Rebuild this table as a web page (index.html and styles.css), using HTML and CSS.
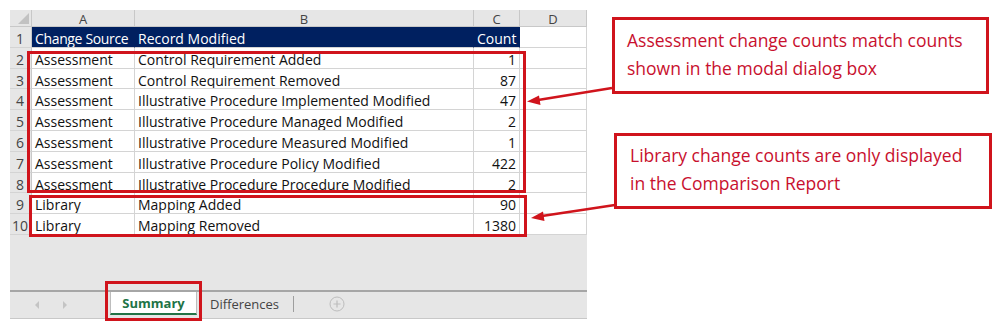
FILE: index.html
```html
<!DOCTYPE html>
<html>
<head>
<meta charset="utf-8">
<link rel="stylesheet" href="styles.css">
</head>
<body>
<div class="page">
  <div class="sheet">
    <div class="grid">
      <div class="corner"><span class="tri"></span></div>
      <div class="colhead">A</div>
      <div class="colhead">B</div>
      <div class="colhead">C</div>
      <div class="colhead">D</div>

      <div class="rowhead">1</div>
      <div class="cell hdr tight">Change Source</div>
      <div class="cell hdr">Record Modified</div>
      <div class="cell hdr num">Count</div>
      <div class="cell"></div>

      <div class="rowhead">2</div>
      <div class="cell">Assessment</div>
      <div class="cell">Control Requirement Added</div>
      <div class="cell num">1</div>
      <div class="cell"></div>

      <div class="rowhead">3</div>
      <div class="cell">Assessment</div>
      <div class="cell">Control Requirement Removed</div>
      <div class="cell num">87</div>
      <div class="cell"></div>

      <div class="rowhead">4</div>
      <div class="cell">Assessment</div>
      <div class="cell">Illustrative Procedure Implemented Modified</div>
      <div class="cell num">47</div>
      <div class="cell"></div>

      <div class="rowhead">5</div>
      <div class="cell">Assessment</div>
      <div class="cell">Illustrative Procedure Managed Modified</div>
      <div class="cell num">2</div>
      <div class="cell"></div>

      <div class="rowhead">6</div>
      <div class="cell">Assessment</div>
      <div class="cell">Illustrative Procedure Measured Modified</div>
      <div class="cell num">1</div>
      <div class="cell"></div>

      <div class="rowhead">7</div>
      <div class="cell">Assessment</div>
      <div class="cell">Illustrative Procedure Policy Modified</div>
      <div class="cell num">422</div>
      <div class="cell"></div>

      <div class="rowhead">8</div>
      <div class="cell">Assessment</div>
      <div class="cell">Illustrative Procedure Procedure Modified</div>
      <div class="cell num">2</div>
      <div class="cell"></div>

      <div class="rowhead">9</div>
      <div class="cell">Library</div>
      <div class="cell">Mapping Added</div>
      <div class="cell num">90</div>
      <div class="cell"></div>

      <div class="rowhead">10</div>
      <div class="cell">Library</div>
      <div class="cell">Mapping Removed</div>
      <div class="cell num">1380</div>
      <div class="cell"></div>
    </div>
    <div class="blank"></div>
    <div class="tabbar">
      <div class="nav">
        <span class="navl"></span>
        <span class="navr"></span>
      </div>
      <div class="tab active">Summary</div>
      <div class="tab">Differences</div>
      <div class="sep"></div>
      <div class="plus">
        <svg width="16" height="16" viewBox="0 0 16 16"><circle cx="8" cy="8" r="7" fill="none" stroke="#bdbdbd" stroke-width="1"/><path d="M8 4.5v7M4.5 8h7" stroke="#bdbdbd" stroke-width="1.2"/></svg>
      </div>
    </div>
  </div>

  <div class="notes">
    <div class="callout c1">Assessment change counts match counts shown in the modal dialog box</div>
    <div class="callout c2">Library change counts are only displayed in the Comparison Report</div>
  </div>

  <div class="hl hl1"></div>
  <div class="hl hl2"></div>
  <div class="hl hl3"></div>

  <svg class="arrows" width="997" height="329" viewBox="0 0 997 329">
    <line x1="612" y1="88" x2="538" y2="100" stroke="#d0141c" stroke-width="2.5"/>
    <polygon points="527,101.5 539,95.5 540.5,105" fill="#d0141c"/>
    <line x1="615" y1="205" x2="542" y2="216" stroke="#d0141c" stroke-width="2.5"/>
    <polygon points="531,218 543,211.5 544.5,221" fill="#d0141c"/>
  </svg>
</div>
</body>
</html>
```

FILE: styles.css
```css
* { box-sizing: border-box; }
html, body { margin: 0; padding: 0; background: #fff; }
.page {
  position: relative;
  width: 997px;
  height: 329px;
  display: flex;
  align-items: flex-start;
  overflow: hidden;
  font-family: "Open Sans", "Liberation Sans", sans-serif;
}
.sheet {
  margin: 10px 0 0 10px;
  width: 577px;
  display: flex;
  flex-direction: column;
  background: #e6e6e6;
}
.grid {
  display: grid;
  grid-template-columns: 22px 103px 339px 46px 67px;
  grid-template-rows: 17px repeat(10, 20.8px);
  background: #fff;
  font-size: 14px;
  color: #111;
}
.corner {
  position: relative;
  background: #e6e6e6;
  border-right: 1px solid #c8c8c8;
  border-bottom: 1px solid #c8c8c8;
}
.tri {
  position: absolute;
  right: 2px;
  bottom: 2px;
  width: 0; height: 0;
  border-left: 11px solid transparent;
  border-bottom: 11px solid #c2c2c2;
}
.colhead {
  background: #e6e6e6;
  border-right: 1px solid #c8c8c8;
  border-bottom: 1px solid #c8c8c8;
  color: #444;
  font-size: 13px;
  text-align: center;
  line-height: 16px;
  padding-top: 1px;
}
.rowhead {
  background: #e6e6e6;
  border-right: 1px solid #c8c8c8;
  border-bottom: 1px solid #d4d4d4;
  color: #444;
  font-size: 14px;
  text-align: center;
  line-height: 20px;
  padding-top: 2px;
  padding-right: 1px;
  white-space: nowrap;
}
.cell {
  border-right: 1px solid #d4d4d4;
  border-bottom: 1px solid #d4d4d4;
  padding: 2px 3px 0;
  line-height: 20px;
  white-space: nowrap;
  overflow: hidden;
}
.cell.hdr {
  background: #002060;
  color: #fff;
  border-right: 1px solid #002060;
  border-bottom: 1px solid #d4d4d4;
}
.cell.tight { letter-spacing: -0.35px; }
.cell.num { text-align: right; }
.blank { height: 55px; }
.tabbar {
  height: 29px;
  border-top: 2px solid #a6a6a6;
  border-bottom: 1px solid #c8c8c8;
  display: flex;
  align-items: stretch;
  font-size: 13px;
}
.nav {
  width: 95px;
  display: flex;
  align-items: center;
  padding-left: 25px;
  gap: 22px;
}
.navl, .navr { width: 0; height: 0; border-top: 4px solid transparent; border-bottom: 4px solid transparent; }
.navl { border-right: 4px solid #c4c4c4; }
.navr { border-left: 4px solid #c4c4c4; margin-left: 2px; }
.tab {
  padding: 0 12px 1px 13px;
  display: flex;
  align-items: center;
  color: #444;
}
.tab.active {
  width: 87px;
  justify-content: center;
  background: #fff;
  color: #217346;
  font-weight: 700;
  border-left: 1px solid #bdbdbd;
  border-right: 1px solid #bdbdbd;
  border-bottom: 2px solid #217346;
  margin-bottom: 3px;
  padding: 2px 0 0;
  margin-left: 5px;
}
.sep {
  width: 1px;
  background: #9e9e9e;
  margin: 4px 0 6px 2px;
}
.plus {
  display: flex;
  align-items: center;
  margin-left: 35px;
  padding-bottom: 1px;
}
.notes {
  display: flex;
  flex-direction: column;
  margin-left: 25px;
  padding-top: 17px;
  gap: 39px;
}
.callout {
  border: 3px solid #d0141c;
  color: #c8102e;
  font-size: 17.5px;
  line-height: 28px;
  padding: 6px 10px 9px 12px;
  height: 77px;
}
.c1 { width: 377px; }
.c2 { width: 378px; margin-left: 2px; height: 76px; padding-left: 13px; padding-top: 5px; }
.hl {
  position: absolute;
  border: 3px solid #d0141c;
  pointer-events: none;
}
.hl1 { left: 27px; top: 51px; width: 499px; height: 142px; }
.hl2 { left: 29px; top: 195px; width: 498px; height: 42px; }
.hl3 { left: 105px; top: 281px; width: 97px; height: 40px; }
.arrows { position: absolute; left: 0; top: 0; pointer-events: none; }
```
